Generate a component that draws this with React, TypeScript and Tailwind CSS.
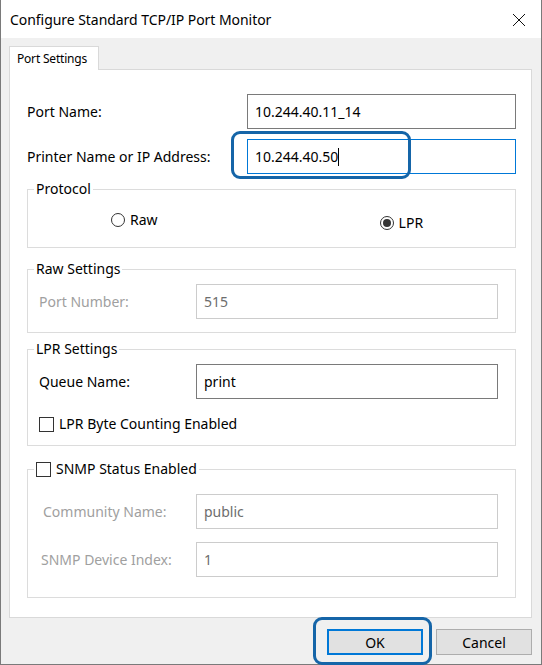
import React from 'react';

const font = { fontFamily: '"Noto Sans", "Segoe UI", Arial, sans-serif' };

const Radio = ({ checked }: { checked?: boolean }) => (
  <span className="w-[14px] h-[14px] rounded-full border border-[#333333] bg-white flex items-center justify-center shrink-0">
    {checked && <span className="w-[8px] h-[8px] rounded-full bg-[#333333]" />}
  </span>
);

const Check = () => <span className="w-[15px] h-[15px] border border-[#333333] bg-white shrink-0" />;

const Field = ({ value, disabled, focused, cursor }: { value: string; disabled?: boolean; focused?: boolean; cursor?: boolean }) => (
  <div
    className={`h-[35px] flex items-center pl-[7px] bg-white border text-[14px] ${
      focused ? 'border-[#0078d7]' : disabled ? 'border-[#cccccc] text-[#6d6d6d]' : 'border-[#7a7a7a] text-black'
    }`}
  >
    <span>{value}</span>
    {cursor && <span className="w-px h-[18px] bg-black" />}
  </div>
);

const Group = ({ legend, className, children }: { legend: React.ReactNode; className: string; children: React.ReactNode }) => (
  <div className={`relative border border-[#dcdcdc] ${className}`}>
    <div className="absolute -top-[11px] left-[6px] px-[2px] bg-white leading-[20px] text-[14px] flex items-center gap-[5px]">
      {legend}
    </div>
    {children}
  </div>
);

export default function App() {
  return (
    <div className="w-[542px] h-[665px] bg-[#f0f0f0] border-x border-b border-[#7a7a7a] flex flex-col text-black" style={font}>
      {/* title bar */}
      <div className="h-[38px] bg-white flex items-center justify-between pl-[9px] pr-[15px] shrink-0">
        <span className="text-[14px] tracking-[-0.05px]">Configure Standard TCP/IP Port Monitor</span>
        <svg width="14" height="14" viewBox="0 0 14 14" className="mt-[2px]">
          <path d="M1 1 L13 13 M13 1 L1 13" stroke="#111" strokeWidth="1" fill="none" />
        </svg>
      </div>

      <div className="pl-[8px] pr-[9px]">
        <div className="mt-[8px] flex">
          <div className="relative z-10 -mb-px w-[90px] h-[24px] bg-white border-t border-x border-[#d9d9d9] flex items-center pl-[7px] text-[12px] tracking-[-0.2px]">
            Port Settings
          </div>
        </div>

        <div className="relative h-[549px] bg-white border border-[#d9d9d9] pl-[17px] pr-[15px] pt-[24px]">
          {/* Port name */}
          <div className="flex items-center h-[35px]">
            <span className="w-[220px] text-[14px]">Port Name:</span>
            <div className="flex-1"><Field value="10.244.40.11_14" /></div>
          </div>
          <div className="flex items-center h-[35px] mt-[10px]">
            <span className="w-[220px] text-[14px]">Printer Name or IP Address:</span>
            <div className="flex-1"><Field value="10.244.40.50" focused cursor /></div>
          </div>

          {/* Protocol */}
          <Group legend="Protocol" className="mt-[15px] h-[59px]">
            <div className="flex items-start pt-[20px]">
              <label className="ml-[83px] flex items-center gap-[5px] text-[14px] leading-[20px]">
                <Radio /> Raw
              </label>
              <label className="ml-[222px] mt-[3px] flex items-center gap-[5px] text-[14px] leading-[20px]">
                <Radio checked /> LPR
              </label>
            </div>
          </Group>

          {/* Raw settings */}
          <Group legend="Raw Settings" className="mt-[21px] h-[64px]">
            <div className="flex items-center mt-[14px] pl-[11px] pr-[17px]">
              <span className="w-[157px] text-[14px] text-[#a0a0a0]">Port Number:</span>
              <div className="flex-1"><Field value="515" disabled /></div>
            </div>
          </Group>

          {/* LPR settings */}
          <Group legend="LPR Settings" className="mt-[16px] h-[97px]">
            <div className="flex items-center mt-[14px] pl-[11px] pr-[17px]">
              <span className="w-[157px] text-[14px]">Queue Name:</span>
              <div className="flex-1"><Field value="print" /></div>
            </div>
            <label className="flex items-center gap-[5px] mt-[17px] pl-[11px] text-[14px] leading-[16px]">
              <Check /> LPR Byte Counting Enabled
            </label>
          </Group>

          {/* SNMP */}
          <Group
            legend={
              <>
                <Check />
                <span>SNMP Status Enabled</span>
              </>
            }
            className="mt-[23px] h-[129px]"
          >
            <div className="flex items-center mt-[24px] pr-[17px]">
              <span className="w-[168px] pl-[15px] text-[14px] text-[#a0a0a0]">Community Name:</span>
              <div className="flex-1"><Field value="public" disabled /></div>
            </div>
            <div className="flex items-center mt-[13px] pr-[17px]">
              <span className="w-[168px] pl-[13px] text-[14px] text-[#a0a0a0]">SNMP Device Index:</span>
              <div className="flex-1"><Field value="1" disabled /></div>
            </div>
          </Group>

          {/* focus callout around printer address field */}
          <div className="absolute left-[221px] top-[61px] w-[180px] h-[48px] rounded-[9px] border-[3px] border-[#1565a8] pointer-events-none" />
        </div>

        {/* buttons */}
        <div className="relative flex justify-end gap-[13px] mt-[11px]">
          <button className="w-[96px] h-[26px] bg-[#e1e1e1] border-2 border-[#0078d7] text-[14px]">OK</button>
          <button className="w-[96px] h-[26px] bg-[#e1e1e1] border border-[#adadad] text-[14px]">Cancel</button>
          <div className="absolute left-[304px] -top-[12px] w-[119px] h-[48px] rounded-[9px] border-[3px] border-[#1565a8] pointer-events-none" />
        </div>
      </div>
    </div>
  );
}
